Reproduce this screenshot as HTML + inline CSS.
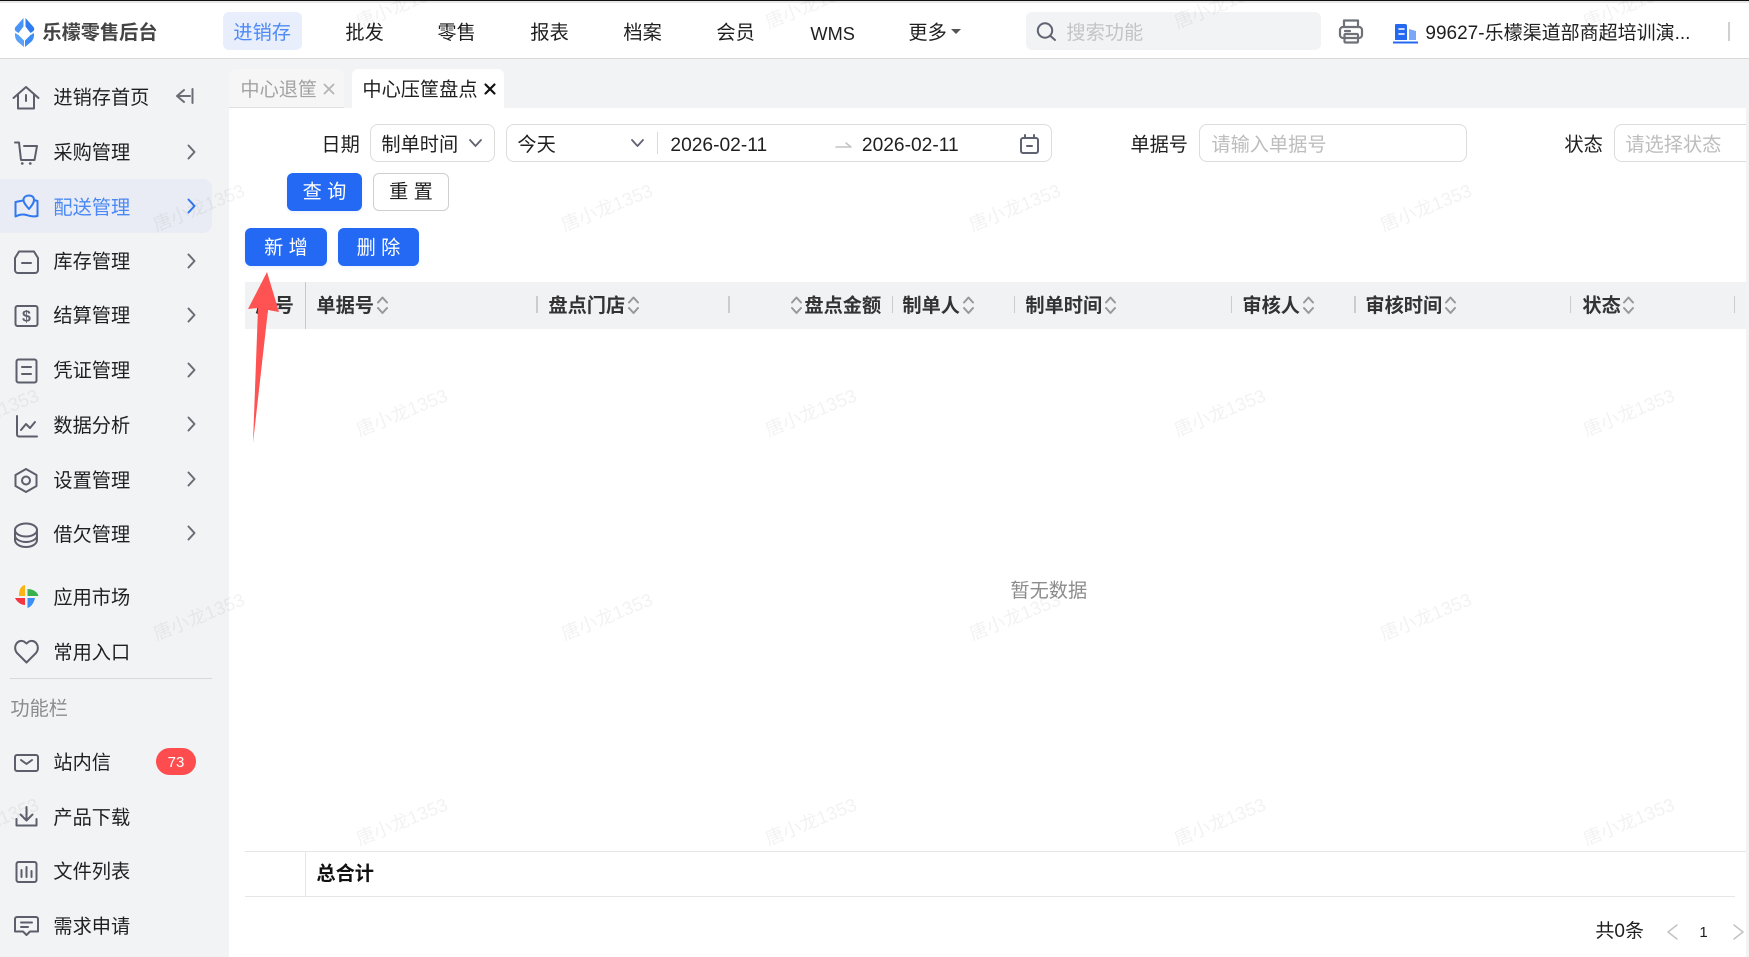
<!DOCTYPE html>
<html lang="zh-CN">
<head>
<meta charset="utf-8">
<title>中心压筐盘点</title>
<style>
html,body{margin:0;padding:0;width:1749px;height:957px;overflow:hidden;background:#fff;}
body{position:relative;font-family:"Liberation Sans","Noto Sans CJK SC",sans-serif;font-size:19.2px;color:#1f1f1f;}
.b{position:absolute;box-sizing:border-box;}
.t{position:absolute;white-space:nowrap;line-height:30px;height:30px;margin-top:2px;margin-left:-.6px;}
.n{margin-top:1.5px;}
.f{margin-top:.7px;}
.h{font-weight:700;color:#333;}
.btn{position:absolute;box-sizing:border-box;height:38px;line-height:42px;text-align:center;border-radius:6px;background:#2369f3;color:#fff;box-shadow:0 2px 3px rgba(35,105,243,.08);}
.in{position:absolute;box-sizing:border-box;border:1px solid #dcdcdc;border-radius:8px;background:#fff;height:38px;}
.w{position:absolute;white-space:nowrap;font-size:18.5px;line-height:20px;color:rgba(0,0,0,.05);transform:translate(-50%,-50%) rotate(-22deg);pointer-events:none;}
svg{position:absolute;left:0;top:0;}
</style>
</head>
<body>
<!-- frame -->
<div class="b" style="left:0;top:0;width:1749px;height:957px;background:#f2f3f5;"></div>
<div class="b" style="left:0;top:0;width:1749px;height:1px;background:#111;"></div>
<div class="b" style="left:0;top:1px;width:1749px;height:2px;background:#e6e6e6;"></div>
<div class="b" style="left:0;top:3px;width:1749px;height:55px;background:#fff;"></div>
<div class="b" style="left:0;top:58px;width:1749px;height:1px;background:#d9d9d9;"></div>
<div class="b" style="left:229px;top:108px;width:1517px;height:849px;background:#fff;"></div>

<!-- header -->
<div class="t n" style="left:43px;top:17px;font-weight:700;color:#444;">乐檬零售后台</div>
<div class="b" style="left:223px;top:12px;width:79px;height:38px;background:#e8eefb;border-radius:6px;"></div>
<div class="t n" style="left:234px;top:17px;color:#4d8af5;">进销存</div>
<div class="t n" style="left:346px;top:17px;">批发</div>
<div class="t n" style="left:438px;top:17px;">零售</div>
<div class="t n" style="left:531px;top:17px;">报表</div>
<div class="t n" style="left:624px;top:17px;">档案</div>
<div class="t n" style="left:717px;top:17px;">会员</div>
<div class="t n" style="left:811px;top:17px;font-size:18.2px;">WMS</div>
<div class="t n" style="left:909px;top:17px;">更多</div>
<div class="b" style="left:1026px;top:12px;width:295px;height:38px;background:#f2f3f5;border-radius:6px;"></div>
<div class="t n" style="left:1067px;top:17px;color:#c4c4c4;">搜索功能</div>
<div class="t n" style="left:1426px;top:17px;width:270px;font-size:19px;">99627-乐檬渠道部商超培训演...</div>
<div class="b" style="left:1728px;top:22px;width:2px;height:19px;background:#d0d0d0;"></div>

<!-- tabs -->
<div class="b" style="left:229px;top:69px;width:115px;height:39px;background:#f6f6f7;border-radius:6px 6px 0 0;border-bottom:1px solid #e0e0e0;"></div>
<div class="b" style="left:352px;top:69px;width:152px;height:40px;background:#fff;border-radius:6px 6px 0 0;"></div>
<div class="t" style="left:241px;top:74px;color:#a3a3a3;">中心退筐</div>
<div class="t" style="left:363px;top:74px;">中心压筐盘点</div>

<!-- sidebar -->
<div class="b" style="left:0;top:179px;width:212px;height:54px;background:#e9ecf4;border-radius:0 9px 9px 0;"></div>
<div class="t" style="left:54px;top:82px;">进销存首页</div>
<div class="t" style="left:54px;top:137px;">采购管理</div>
<div class="t" style="left:54px;top:192px;color:#4a89f5;">配送管理</div>
<div class="t" style="left:54px;top:246px;">库存管理</div>
<div class="t" style="left:54px;top:300px;">结算管理</div>
<div class="t" style="left:54px;top:355px;">凭证管理</div>
<div class="t" style="left:54px;top:410px;">数据分析</div>
<div class="t" style="left:54px;top:465px;">设置管理</div>
<div class="t" style="left:54px;top:519px;">借欠管理</div>
<div class="t" style="left:54px;top:582px;">应用市场</div>
<div class="t" style="left:54px;top:637px;">常用入口</div>
<div class="b" style="left:10px;top:678px;width:202px;height:1px;background:#d9d9d9;"></div>
<div class="t" style="left:11px;top:693px;color:#8c8c8c;">功能栏</div>
<div class="t" style="left:54px;top:747px;">站内信</div>
<div class="b" style="left:156px;top:748px;width:40px;height:27px;background:#ff4d4f;border-radius:14px;color:#fff;font-size:15px;line-height:29px;text-align:center;">73</div>
<div class="t" style="left:54px;top:802px;">产品下载</div>
<div class="t" style="left:54px;top:856px;">文件列表</div>
<div class="t" style="left:54px;top:911px;">需求申请</div>

<!-- form -->
<div class="t f" style="left:322px;top:130px;">日期</div>
<div class="in" style="left:370px;top:124px;width:125px;"></div>
<div class="t f" style="left:382px;top:130px;">制单时间</div>
<div class="in" style="left:506px;top:124px;width:546px;"></div>
<div class="t f" style="left:518px;top:130px;">今天</div>
<div class="b" style="left:657px;top:132px;width:1px;height:22px;background:#d9d9d9;"></div>
<div class="t f" style="left:671px;top:130px;">2026-02-11</div>
<div class="t f" style="left:862.500px;top:130px;">2026-02-11</div>
<div class="t f" style="left:1131px;top:130px;">单据号</div>
<div class="in" style="left:1199px;top:124px;width:268px;"></div>
<div class="t f" style="left:1212px;top:130px;color:#bdbdbd;">请输入单据号</div>
<div class="t f" style="left:1565px;top:130px;">状态</div>
<div class="in" style="left:1614px;top:124px;width:140px;"></div>
<div class="t f" style="left:1626px;top:130px;color:#bdbdbd;">请选择状态</div>
<div class="b" style="left:1746px;top:108px;width:3px;height:849px;background:#f2f3f5;"></div>

<div class="btn" style="left:287px;top:173px;width:75px;line-height:39px;">查 询</div>
<div class="btn" style="left:373px;top:173px;width:76px;background:#fff;color:#1f1f1f;border:1px solid #cfcfcf;box-shadow:none;line-height:37px;">重 置</div>
<div class="btn" style="left:245px;top:228px;width:82px;">新 增</div>
<div class="btn" style="left:338px;top:228px;width:81px;">删 除</div>

<!-- table header -->
<div class="b" style="left:245px;top:282px;width:1501px;height:47px;background:#f1f2f4;"></div>
<div class="b" style="left:305px;top:282px;width:1px;height:47px;background:#c9c9c9;"></div>
<div class="b" style="left:536px;top:296px;width:2px;height:17px;background:#c9ccd1;"></div>
<div class="b" style="left:728px;top:296px;width:2px;height:17px;background:#c9ccd1;"></div>
<div class="b" style="left:892px;top:296px;width:1px;height:17px;background:#c9ccd1;"></div>
<div class="b" style="left:1014px;top:296px;width:1px;height:17px;background:#c9ccd1;"></div>
<div class="b" style="left:1231px;top:296px;width:1px;height:17px;background:#c9ccd1;"></div>
<div class="b" style="left:1354px;top:296px;width:2px;height:17px;background:#c9ccd1;"></div>
<div class="b" style="left:1570px;top:296px;width:1px;height:17px;background:#c9ccd1;"></div>
<div class="b" style="left:1734px;top:296px;width:1px;height:17px;background:#c9ccd1;"></div>
<div class="t h" style="left:256px;top:290px;">序号</div>
<div class="t h" style="left:317px;top:290px;">单据号</div>
<div class="t h" style="left:549px;top:290px;">盘点门店</div>
<div class="t h" style="left:805px;top:290px;">盘点金额</div>
<div class="t h" style="left:903px;top:290px;">制单人</div>
<div class="t h" style="left:1026px;top:290px;">制单时间</div>
<div class="t h" style="left:1243px;top:290px;">审核人</div>
<div class="t h" style="left:1366px;top:290px;">审核时间</div>
<div class="t h" style="left:1583px;top:290px;">状态</div>

<div class="t" style="left:1011px;top:575px;color:#8c8c8c;">暂无数据</div>

<!-- summary -->
<div class="b" style="left:245px;top:851px;width:1501px;height:1px;background:#e6e6e6;"></div>
<div class="b" style="left:245px;top:896px;width:1490px;height:1px;background:#e6e6e6;"></div>
<div class="b" style="left:305px;top:851px;width:1px;height:45px;background:#e6e6e6;"></div>
<div class="t" style="left:317px;top:858px;font-weight:700;color:#111;">总合计</div>
<div class="t" style="left:1596px;top:915px;font-size:19px;">共0条</div>
<div class="t" style="left:1700px;top:916px;font-size:15px;">1</div>

<svg width="1749" height="957" viewBox="0 0 1749 957" fill="none" stroke-linecap="round" stroke-linejoin="round">
  <!-- logo -->
  <path d="M23.500 18 L15.500 27 Q14 29 15.500 31 L18.500 33 L23.500 26.500 Z" fill="#4a94f6"/>
  <path d="M25.500 18 L33.500 27 Q35 29 33.500 31 L30.500 33 L25.500 26.500 Z" fill="#2f7bf0"/>
  <path d="M15 33 Q14.500 39 18 42 L24 47 V40.500 L18.500 35 Z" fill="#5aa2f8"/>
  <path d="M34 33 Q34.500 39 31 42 L25 47 V40.500 L30.500 35 Z" fill="#3d8bf5"/>
  <!-- header icons -->
  <path d="M951 29 h10 l-5 5 z" fill="#555"/>
  <circle cx="1045" cy="30.500" r="7.200" stroke="#5f6270" stroke-width="2"/>
  <path d="M1050.500 36 L1055 40" stroke="#5f6270" stroke-width="2"/>
  <g stroke="#6f7178" stroke-width="2.200">
    <path d="M1344 27 V20.500 H1358 V27"/>
    <rect x="1340" y="27" width="22" height="11" rx="3"/>
    <rect x="1344.500" y="34" width="13.500" height="8.500" rx="1"/>
    <path d="M1345 31 h5"/>
  </g>
  <path d="M1396 24 h9 a2 2 0 0 1 2 2 v14 h-12 v-15 a1 1 0 0 1 1 -1 z" fill="#2468f2"/>
  <path d="M1409 29 l7 2 v9 h-7 z" fill="#7aa7f7"/>
  <path d="M1393 41.500 h25 v2 h-25 z" fill="#2468f2"/>
  <path d="M1399 29 h5 M1399 34 h5" stroke="#fff" stroke-width="1.600"/>
  <!-- tab close -->
  <path d="M324.500 84.500 L333.500 93.500 M333.500 84.500 L324.500 93.500" stroke="#b5b5b5" stroke-width="1.800"/>
  <path d="M485.500 84.500 L494.500 93.500 M494.500 84.500 L485.500 93.500" stroke="#111" stroke-width="2.200"/>
  <!-- sidebar icons -->
  <g stroke="#5c5f6b" stroke-width="2">
    <path d="M13.500 98 L26 87 L38.500 98 M18 94 V108.500 H34 V94 M26 95 V101"/>
    <path d="M15 142.500 H19 L21 160 H34.500 L37 146 H24"/>
    <path d="M22 163.500 h.5 M30 163.500 h.5" stroke-width="2.400"/>
    <path d="M19 251.500 H34 L38 258 V270 A3 3 0 0 1 35 273 H18 A3 3 0 0 1 15 270 V258 Z M22 263 H31"/>
    <rect x="15.500" y="306" width="22" height="20" rx="2"/>
    <rect x="16.500" y="359.500" width="20" height="23" rx="2"/>
    <path d="M22 367 H31 M22 374 H31"/>
    <path d="M17 416 V434 Q17 436.500 19 436.500 H37 M21 430 L26 424 L30 428 L35 422"/>
    <path d="M26 469 L36.500 475 V486 L26 492 L15.500 486 V475 Z"/>
    <circle cx="26" cy="480.500" r="4"/>
    <ellipse cx="26" cy="530" rx="11" ry="6.500"/>
    <path d="M15 530 V540 C15 544 20 547 26 547 C32 547 37 544 37 540 V530 M15 535.500 C15 539 20 542 26 542 C32 542 37 539 37 535.500"/>
    <path d="M26.500 662.500 L17 653 C12 646.500 18 638.500 24 641.500 L26.500 643.500 L29 641.500 C35 638.500 41 646.500 36 653 Z"/>
    <rect x="15" y="755" width="23" height="16" rx="2"/>
    <path d="M21 760 L26.500 764 L32 760"/>
    <path d="M26.500 807 V820 M20.500 814.500 L26.500 820.500 L32.500 814.500 M16.500 819 V825.500 H36.500 V819"/>
    <rect x="16.500" y="862" width="20" height="20" rx="2"/>
    <path d="M21.500 870 V877 M26.500 867 V877 M31.500 871 V877"/>
    <path d="M17 917 H36 A2 2 0 0 1 38 919 V931.500 H30 L26.500 935 L23 931.500 H15 V919 A2 2 0 0 1 17 917 Z M21 922.500 H32 M21 927 H28"/>
  </g>
  <text x="26.500" y="321.500" font-size="16" font-weight="700" fill="#5c5f6b" text-anchor="middle" font-family="Liberation Sans, sans-serif">$</text>
  <g stroke="#2f78f0" stroke-width="2">
    <path d="M23 200.500 L15.500 202 V216.500 C20 214 23 214 26.500 215 C30 216 33 217 37.500 216 V201 L34 200"/>
    <path d="M34 200 C34 197 32 195.500 29 195.500 C26 195.500 23.500 197 23.500 200 C23.500 203 26.500 206 29 209 C31.500 206 34 203 34 200 Z"/>
  </g>
  <path d="M177 96 H190 M184 90 L177 96 L184 102 M192.500 89 V103" stroke="#6a6d75" stroke-width="2"/>
  <!-- colored app icon -->
  <path d="M25 585 C20 586 19 591 19 596 H25 Z" fill="#fbb414"/>
  <path d="M27.500 596 V589 C32 589 37 591 38.500 596 Z" fill="#37b24d"/>
  <path d="M27.500 598 H35 C34 603 31 607 27.500 608 Z" fill="#3d8ef5"/>
  <path d="M25 598 V605 C21 605 17 602 15 598 Z" fill="#f5353f"/>
  <!-- chevrons -->
  <g stroke="#6a6d75" stroke-width="2">
    <path d="M188.500 145.500 L194.500 152 L188.500 158.500"/>
    <path d="M188.500 254.500 L194.500 261 L188.500 267.500"/>
    <path d="M188.500 308.500 L194.500 315 L188.500 321.500"/>
    <path d="M188.500 363.500 L194.500 370 L188.500 376.500"/>
    <path d="M188.500 417.500 L194.500 424 L188.500 430.500"/>
    <path d="M188.500 472.500 L194.500 479 L188.500 485.500"/>
    <path d="M188.500 526.500 L194.500 533 L188.500 539.500"/>
  </g>
  <path d="M188.500 199.500 L194.500 206 L188.500 212.500" stroke="#2f78f0" stroke-width="2"/>
  <!-- form icons -->
  <g stroke="#5f6270" stroke-width="1.800">
    <path d="M470 140 L475.500 146 L481 140"/>
    <path d="M632 140 L637.500 146 L643 140"/>
  </g>
  <path d="M836 147 H851 L846 143" stroke="#c4c4c4" stroke-width="1.600"/>
  <g stroke="#5f6270" stroke-width="2">
    <rect x="1021" y="138" width="17" height="15" rx="2"/>
    <path d="M1025 135 V138 M1034 135 V138 M1027 146 H1032"/>
  </g>
  <!-- sort icons -->
  <g stroke="#969899" stroke-width="2">
    <path d="M378 302.500 l4.500 -5 l4.500 5 M378 308 l4.500 5 l4.500 -5"/>
    <path d="M629 302.500 l4.500 -5 l4.500 5 M629 308 l4.500 5 l4.500 -5"/>
    <path d="M792 302.500 l4.500 -5 l4.500 5 M792 308 l4.500 5 l4.500 -5"/>
    <path d="M964 302.500 l4.500 -5 l4.500 5 M964 308 l4.500 5 l4.500 -5"/>
    <path d="M1106 302.500 l4.500 -5 l4.500 5 M1106 308 l4.500 5 l4.500 -5"/>
    <path d="M1304 302.500 l4.500 -5 l4.500 5 M1304 308 l4.500 5 l4.500 -5"/>
    <path d="M1446 302.500 l4.500 -5 l4.500 5 M1446 308 l4.500 5 l4.500 -5"/>
    <path d="M1624 302.500 l4.500 -5 l4.500 5 M1624 308 l4.500 5 l4.500 -5"/>
  </g>
  <!-- pagination -->
  <path d="M1677 925 L1668 932 L1677 939" stroke="#c4c4c4" stroke-width="1.600"/>
  <path d="M1734 925 L1743 932 L1734 939" stroke="#c4c4c4" stroke-width="1.600"/>
  <!-- annotation arrow -->
  <path d="M267 272 L248 309 L258 308 L253 443 L268 310 L279 312 Z" fill="#ff5252"/>
</svg>

<!-- watermarks -->
<div class="w" style="left:402px;top:5px;">唐小龙1353</div>
<div class="w" style="left:811px;top:5px;">唐小龙1353</div>
<div class="w" style="left:1220px;top:5px;">唐小龙1353</div>
<div class="w" style="left:1629px;top:5px;">唐小龙1353</div>
<div class="w" style="left:199px;top:208px;">唐小龙1353</div>
<div class="w" style="left:607px;top:208px;">唐小龙1353</div>
<div class="w" style="left:1015px;top:208px;">唐小龙1353</div>
<div class="w" style="left:1426px;top:208px;">唐小龙1353</div>
<div class="w" style="left:-7px;top:413px;">唐小龙1353</div>
<div class="w" style="left:402px;top:413px;">唐小龙1353</div>
<div class="w" style="left:811px;top:413px;">唐小龙1353</div>
<div class="w" style="left:1220px;top:413px;">唐小龙1353</div>
<div class="w" style="left:1629px;top:413px;">唐小龙1353</div>
<div class="w" style="left:199px;top:617px;">唐小龙1353</div>
<div class="w" style="left:607px;top:617px;">唐小龙1353</div>
<div class="w" style="left:1015px;top:617px;">唐小龙1353</div>
<div class="w" style="left:1426px;top:617px;">唐小龙1353</div>
<div class="w" style="left:-7px;top:822px;">唐小龙1353</div>
<div class="w" style="left:402px;top:822px;">唐小龙1353</div>
<div class="w" style="left:811px;top:822px;">唐小龙1353</div>
<div class="w" style="left:1220px;top:822px;">唐小龙1353</div>
<div class="w" style="left:1629px;top:822px;">唐小龙1353</div>
</body>
</html>
